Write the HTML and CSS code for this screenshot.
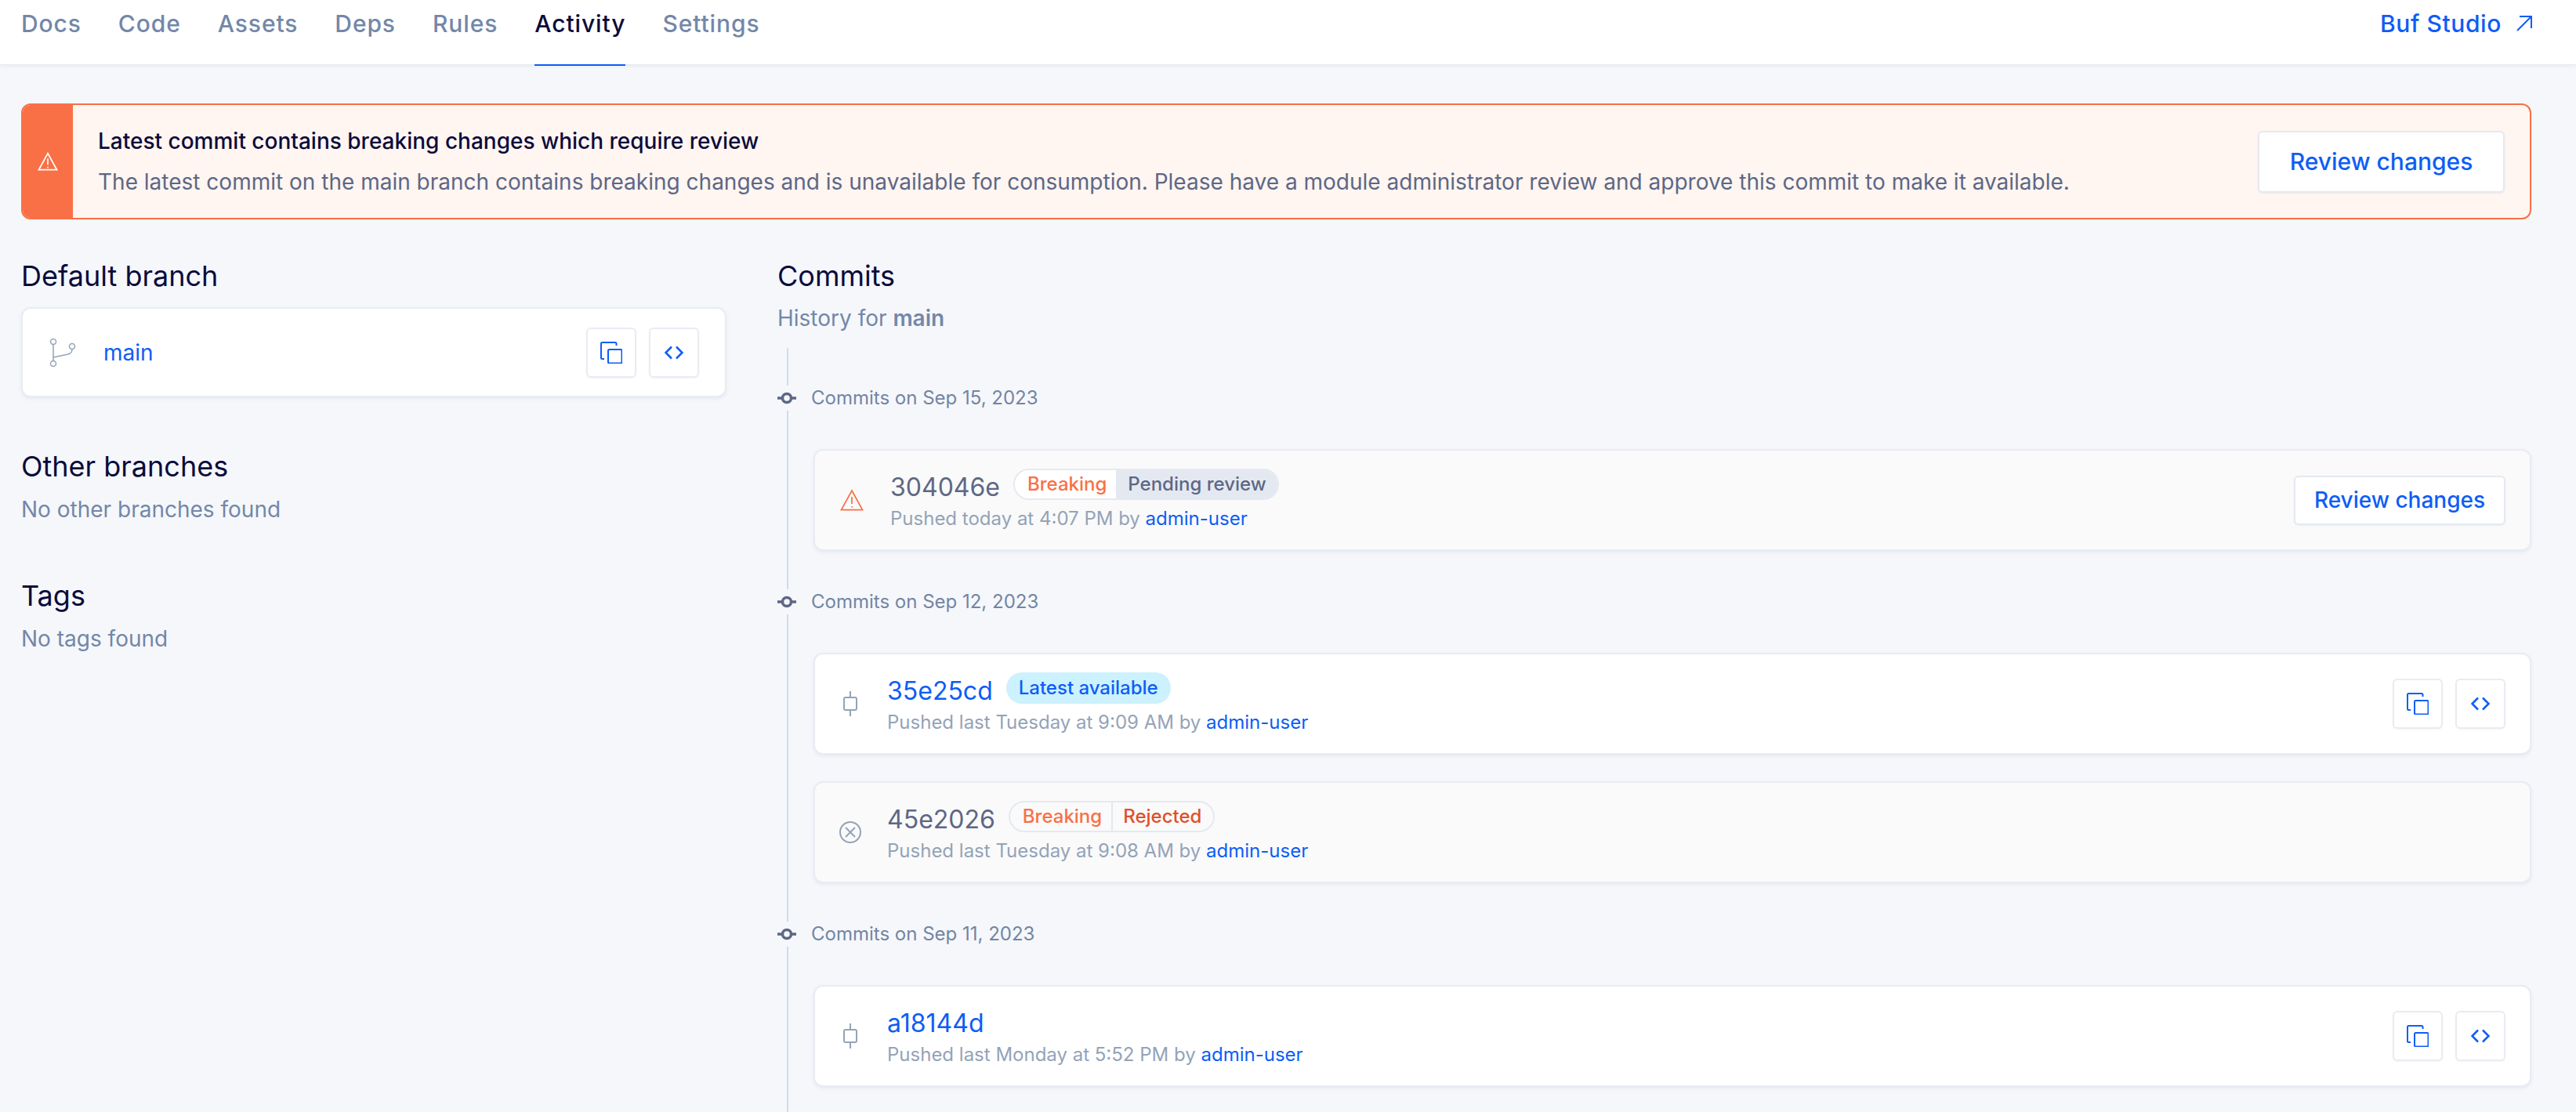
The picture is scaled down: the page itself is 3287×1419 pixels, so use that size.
FILE: index.html
```html
<!DOCTYPE html>
<html lang="en">
<head>
<meta charset="utf-8">
<title>Activity</title>
<link rel="stylesheet" href="styles.css">
</head>
<body>
<svg class="defs" width="0" height="0" aria-hidden="true">
  <defs>
    <symbol id="copy" viewBox="0 0 28 28"><path d="M5 22H2.500A1.500 1.500 0 0 1 1 20.500V2.500A1.500 1.500 0 0 1 2.500 1H19A1.500 1.500 0 0 1 20.500 2.500V5" /><rect x="10" y="10" width="17.500" height="17.500" rx="1.500" /></symbol>
    <symbol id="code" viewBox="0 0 24 18"><path d="M9 1.500 1.500 9 9 16.500M15 1.500 22.500 9 15 16.500" /></symbol>
    <symbol id="commit" viewBox="0 0 18 32"><path d="M9 0V8M9 24V32" /><rect x="1" y="8" width="16" height="16" rx="2" /></symbol>
    <symbol id="warn" viewBox="0 0 30 28"><path d="M15 2 28.500 26.500H1.500Z" /><path d="M15 10V19M15 22V23.500" /></symbol>
    <symbol id="dot" viewBox="0 0 24 16"><circle cx="12" cy="8" r="5.500" /><path d="M0 8H6M18 8H24" /></symbol>
  </defs>
</svg>

<header class="topbar">
  <nav class="tabs">
    <a class="tab">Docs</a>
    <a class="tab">Code</a>
    <a class="tab">Assets</a>
    <a class="tab">Deps</a>
    <a class="tab">Rules</a>
    <a class="tab tab-active">Activity</a>
    <a class="tab">Settings</a>
  </nav>
  <a class="studio">Buf Studio
    <svg class="ic-arrow" viewBox="0 0 20 20"><path d="M1 19 19 1M4 1H19V16" /></svg>
  </a>
</header>

<main class="page">
  <section class="banner">
    <div class="banner-stripe"><svg class="ic-banner"><use href="#warn" /></svg></div>
    <div class="banner-body">
      <div class="banner-title">Latest commit contains breaking changes which require review</div>
      <div class="banner-text">The latest commit on the main branch contains breaking changes and is unavailable for consumption. Please have a module administrator review and approve this commit to make it available.</div>
    </div>
    <button class="btn btn-lg">Review changes</button>
  </section>

  <div class="columns">
    <aside class="side">
      <section class="side-block">
        <h2 class="heading">Default branch</h2>
        <div class="card branch-card">
          <svg class="ic-branch" viewBox="0 0 36 36"><circle cx="5" cy="4" r="3.500" /><circle cx="5" cy="32" r="3.500" /><circle cx="29" cy="10" r="3.500" /><path d="M5 7.500V28.500M5 24 24 20Q29 19 29 13.500" /></svg>
          <a class="branch-name">main</a>
          <div class="actions">
            <button class="btn-icon"><svg class="ic-copy"><use href="#copy" /></svg></button>
            <button class="btn-icon"><svg class="ic-code"><use href="#code" /></svg></button>
          </div>
        </div>
      </section>
      <section class="side-block">
        <h2 class="heading">Other branches</h2>
        <p class="empty">No other branches found</p>
      </section>
      <section class="side-block">
        <h2 class="heading">Tags</h2>
        <p class="empty">No tags found</p>
      </section>
    </aside>

    <section class="commits">
      <h2 class="heading">Commits</h2>
      <p class="history">History for <b>main</b></p>
      <div class="timeline">
        <div class="date-row"><svg class="ic-dot"><use href="#dot" /></svg><span>Commits on Sep 15, 2023</span></div>
        <div class="group">
          <article class="card commit commit-off">
            <svg class="ic-state ic-warn"><use href="#warn" /></svg>
            <div class="commit-main">
              <div class="commit-top"><span class="hash">304046e</span>
                <span class="badge badge-split"><span class="seg seg-break seg-white">Breaking</span><span class="seg seg-pending">Pending review</span></span>
              </div>
              <div class="pushed">Pushed today at 4:07 PM by <a class="user">admin-user</a></div>
            </div>
            <button class="btn btn-sm">Review changes</button>
          </article>
        </div>

        <div class="date-row"><svg class="ic-dot"><use href="#dot" /></svg><span>Commits on Sep 12, 2023</span></div>
        <div class="group">
          <article class="card commit">
            <span class="state-box"><svg class="ic-commit"><use href="#commit" /></svg></span>
            <div class="commit-main">
              <div class="commit-top"><a class="hash hash-link">35e25cd</a><span class="badge badge-latest">Latest available</span></div>
              <div class="pushed">Pushed last Tuesday at 9:09 AM by <a class="user">admin-user</a></div>
            </div>
            <div class="actions">
              <button class="btn-icon"><svg class="ic-copy"><use href="#copy" /></svg></button>
              <button class="btn-icon"><svg class="ic-code"><use href="#code" /></svg></button>
            </div>
          </article>
          <article class="card commit commit-off">
            <span class="state-box"><svg class="ic-x" viewBox="0 0 28 28"><circle cx="14" cy="14" r="13" /><path d="M8 8 20 20M20 8 8 20" /></svg></span>
            <div class="commit-main">
              <div class="commit-top"><span class="hash">45e2026</span>
                <span class="badge badge-split"><span class="seg seg-break seg-div">Breaking</span><span class="seg seg-rejected">Rejected</span></span>
              </div>
              <div class="pushed">Pushed last Tuesday at 9:08 AM by <a class="user">admin-user</a></div>
            </div>
          </article>
        </div>

        <div class="date-row"><svg class="ic-dot"><use href="#dot" /></svg><span>Commits on Sep 11, 2023</span></div>
        <div class="group">
          <article class="card commit">
            <span class="state-box"><svg class="ic-commit"><use href="#commit" /></svg></span>
            <div class="commit-main">
              <div class="commit-top"><a class="hash hash-link">a18144d</a></div>
              <div class="pushed">Pushed last Monday at 5:52 PM by <a class="user">admin-user</a></div>
            </div>
            <div class="actions">
              <button class="btn-icon"><svg class="ic-copy"><use href="#copy" /></svg></button>
              <button class="btn-icon"><svg class="ic-code"><use href="#code" /></svg></button>
            </div>
          </article>
        </div>
      </div>
    </section>
  </div>
</main>
</body>
</html>
```

FILE: styles.css
```css
* { box-sizing: border-box; }
html, body { margin: 0; height: 100%; overflow: hidden; }
body { background: #f5f7fb; font-family: Inter, "Liberation Sans", sans-serif; color: #0b0b3b; }
svg { fill: none; stroke: currentColor; display: block; }
.defs { position: absolute; }
a { color: inherit; text-decoration: none; }
p, h2 { margin: 0; font-weight: 400; }
button { font-family: inherit; cursor: pointer; }

.topbar { height: 83px; background: #fff; border-bottom: 1px solid #e6eaf1; box-shadow: 0 2px 4px rgba(100, 116, 139, .08); display: flex; justify-content: space-between; padding: 0 56px 0 27px; }
.tabs { display: flex; gap: 47px; height: 84px; }
.tab { height: 84px; line-height: 60px; font-size: 30px; font-weight: 500; letter-spacing: .03em; color: #7387a8; border-bottom: 2px solid transparent; }
.tab-active { color: #0b0b3b; border-bottom-color: #0e5df5; }
.studio { display: flex; gap: 19px; align-items: center; height: 60px; font-size: 30px; font-weight: 500; letter-spacing: .02em; color: #0e5df5; }
.ic-arrow { width: 20px; height: 20px; stroke-width: 2; }

.page { padding: 49px 57px 0 27px; }
.banner { height: 148px; display: flex; align-items: center; background: #fff5f1; border: 2px solid #f97046; border-radius: 12px; overflow: hidden; padding-right: 32px; }
.banner-stripe { width: 64px; align-self: stretch; background: #f97046; color: #fff; display: flex; align-items: center; justify-content: center; }
.ic-banner { width: 26px; height: 24px; stroke-width: 2; }
.banner-body { flex: 1; padding-left: 32px; }
.banner-title { font-size: 28px; line-height: 40px; font-weight: 500; margin-bottom: 12px; }
.banner-text { font-size: 28px; line-height: 40px; color: #5d6785; }

.btn { background: #fff; color: #0e5df5; border: 2px solid #e4e9f1; border-radius: 6px; font-weight: 500; box-shadow: 0 1px 2px rgba(100, 116, 139, .08); }
.btn-lg { width: 315px; height: 79px; font-size: 30px; }
.btn-sm { width: 270px; height: 63px; font-size: 28px; }
.btn-icon { width: 64px; height: 64px; padding: 0; background: #fff; color: #0e5df5; border: 2px solid #e8ecf3; border-radius: 6px; display: flex; align-items: center; justify-content: center; box-shadow: 0 1px 2px rgba(100, 116, 139, .08); }
.ic-copy { width: 28px; height: 28px; stroke-width: 2; }
.ic-code { width: 24px; height: 18px; stroke-width: 2.500; }

.columns { display: grid; grid-template-columns: 900px 1fr; gap: 65px; margin-top: 52px; }
.heading { font-size: 36px; line-height: 40px; }
.side-block { margin-bottom: 70px; }
.side-block:first-child { margin-bottom: 68px; }
.card { background: #fff; border: 2px solid #e8ecf3; border-radius: 12px; box-shadow: 0 2px 4px rgba(100, 116, 139, .1); }
.branch-card { height: 115px; margin-top: 20px; display: flex; align-items: center; padding: 0 33px 0 34px; }
.ic-branch { width: 36px; height: 36px; color: #94a3b8; stroke-width: 1.500; margin-right: 33px; }
.branch-name { flex: 1; color: #0e5df5; font-size: 28px; }
.actions { display: flex; gap: 16px; }
.empty { font-size: 28px; line-height: 40px; color: #7387a8; margin-top: 15px; }

.history { font-size: 28px; line-height: 40px; color: #7387a8; margin-top: 14px; }
.history b { font-weight: 600; }
.timeline { position: relative; margin-top: 18px; padding-top: 48px; }
.timeline::before { content: ""; position: absolute; left: 12px; top: 0; bottom: 0; width: 2px; background: #cfdcec; }
.date-row { position: relative; height: 32px; line-height: 30px; background: #f5f7fb; display: flex; align-items: center; gap: 19px; font-size: 24px; color: #7385a3; width: max-content; }
.ic-dot { width: 24px; height: 16px; color: #5d6785; stroke-width: 3.500; }
.group { display: flex; flex-direction: column; gap: 34px; padding: 49px 0 49px 46px; }
.group:last-child { padding-bottom: 33px; }
.commit { height: 130px; display: flex; align-items: center; padding: 0 31px 0 32px; }
.commit-off { background: #fafafa; }
.commit-main { flex: 1; padding-left: 34px; }
.commit-top { display: flex; gap: 17px; align-items: flex-start; height: 47px; }
.hash { font-size: 32px; line-height: 48px; color: #5d6785; }
.hash-link { color: #0e5df5; }
.pushed { font-size: 24px; line-height: 34px; color: #94a3b8; }
.user { color: #0e5df5; }
.state-box { width: 26px; display: flex; justify-content: center; color: #94a3b8; }
.ic-state { width: 30px; height: 28px; stroke-width: 1.750; }
.ic-warn { color: #f97046; }
.ic-commit { width: 18px; height: 32px; stroke-width: 2; flex: none; }
.ic-x { width: 28px; height: 28px; stroke-width: 2; flex: none; }
.badge { height: 40px; border-radius: 20px; font-size: 24px; font-weight: 500; line-height: 36px; display: inline-flex; }
.badge-latest { background: #ccf1ff; color: #0e5df5; padding: 2px 16px; }
.badge-split { border: 2px solid #e4e9f1; overflow: hidden; background: #fafafa; }
.seg-break { color: #f97046; padding: 0 12px 0 16px; }
.seg-white { background: #fff; }
.seg-div { border-right: 2px solid #e4e9f1; }
.seg-pending { background: #e4e9f1; color: #5d6785; padding: 0 14px 0 15px; }
.seg-rejected { color: #e0502a; padding: 0 15px 0 13px; }
```
